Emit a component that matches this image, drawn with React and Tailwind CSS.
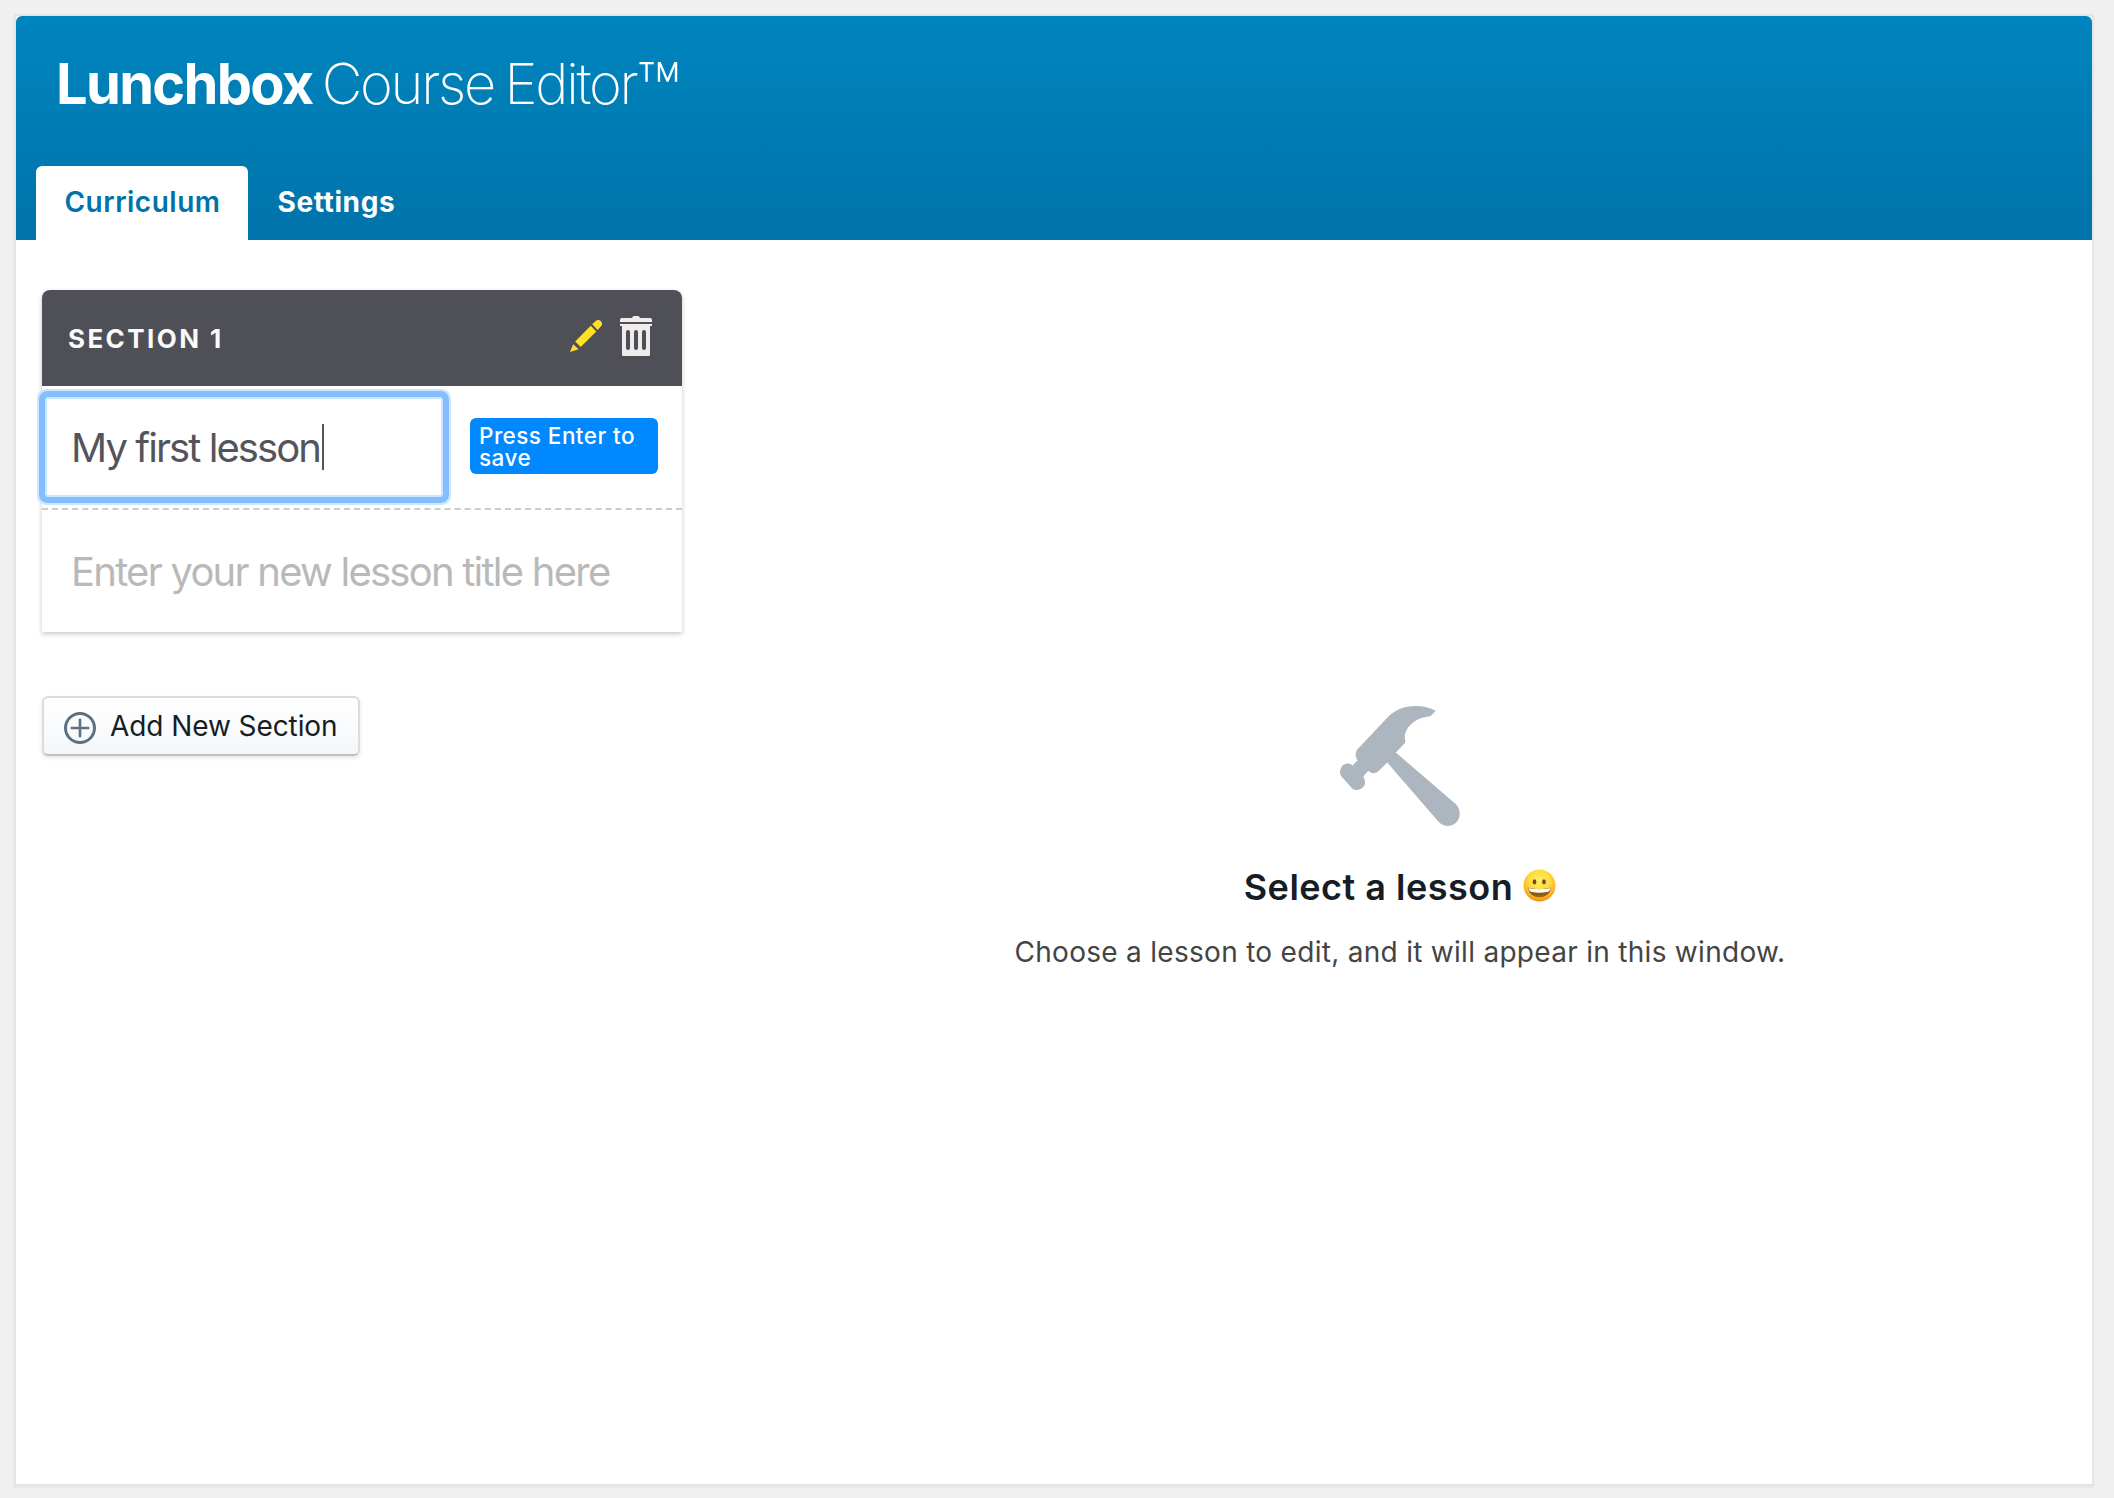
function Pencil() {
  return (
    <svg className="block h-8 w-8" viewBox="0 0 32 32" fill="#ffdf2e" aria-hidden="true">
      <path d="M0 32 3.2 24.2 8.6 29.2z" />
      <path d="M5.2 21.500 20.700 5.700 26.300 11.400 10.700 27.100z" />
      <path d="M22.200 4.300 25.400 1.200C27.100-.4 29.500-.2 31 1.300c1.400 1.500 1.400 3.800-.2 5.300L27.700 9.900z" />
    </svg>
  );
}

function Trash() {
  return (
    <svg className="block h-10 w-8" viewBox="0 0 32 40" aria-hidden="true">
      <path fill="#f0eceb" d="M2 2h10C12.500.6 13.500 0 15 0h2c1.500 0 2.500.6 3 2h10c1.300 0 2 .8 2 2v2H0V4c0-1.200.7-2 2-2z" />
      <path fill="#f0eceb" d="M0 8h32v2h-2v28.500c0 1-.5 1.500-1.500 1.500h-25c-1 0-1.500-.5-1.500-1.500V10H0z" />
      <path stroke="#4f4f57" strokeWidth="4" strokeLinecap="round" d="M8 16v16M16 16v16M24 16v16" />
    </svg>
  );
}

function CirclePlus() {
  return (
    <svg className="block h-8 w-8" viewBox="0 0 32 32" fill="none" stroke="#5d7183" aria-hidden="true">
      <circle cx="16" cy="16" r="14.500" strokeWidth="3" />
      <path d="M16 7.700v16.600M7.700 16h16.600" strokeWidth="2.600" strokeLinecap="round" />
    </svg>
  );
}

function Hammer() {
  return (
    <svg className="block h-[120px] w-[120px]" viewBox="90 77 361 361" fill="#adb6bf" aria-hidden="true">
      <path d="M232 112C256 88 284 77 318 77C340 77 361 83 378 91L362 108C322 110 287 137 285 170C285 176 287 181 287 187L258 217L438 372C446 379 450 390 450 402C450 422 434 438 414 438C403 438 393 433 387 426L232 247L208 271C198 281 183 282 175 272L160 289C168 303 166 314 160 321C152 330 137 333 127 325L97 292C89 284 88 270 94 261C101 250 116 246 128 256L143 240C135 231 136 216 142 208Z" />
    </svg>
  );
}

function Grin() {
  return (
    <svg className="mb-1 block h-[33px] w-[33px]" viewBox="0 0 33 33" role="img" aria-label="😀">
      <defs>
        <radialGradient id="face" cx="0.5" cy="0.34" r="0.66">
          <stop offset="0" stopColor="#fff06a" />
          <stop offset="0.5" stopColor="#ffdb3d" />
          <stop offset="0.8" stopColor="#fcb423" />
          <stop offset="1" stopColor="#ee8c18" />
        </radialGradient>
        <linearGradient id="mouth" x1="0" y1="0" x2="0" y2="1">
          <stop offset="0" stopColor="#6b3c0c" />
          <stop offset="1" stopColor="#a5690f" />
        </linearGradient>
      </defs>
      <circle cx="16.500" cy="16.500" r="16" fill="url(#face)" />
      <ellipse cx="11.500" cy="12.800" rx="1.900" ry="2.600" fill="#7a4a10" />
      <ellipse cx="21" cy="12.800" rx="1.900" ry="2.600" fill="#7a4a10" />
      <path fill="url(#mouth)" d="M5.300 18.700C12 20.400 20.500 20.400 27.700 18.700C27.500 24.500 22.500 28.300 16.500 28.300S5.500 24.500 5.300 18.700z" />
      <path fill="#fff" d="M5.600 19C12 20.600 20.500 20.600 27.400 19C27.200 21.600 26 22.600 24.500 22.900C19 24 14 24 8.500 22.900C6.800 22.600 5.900 21.500 5.600 19z" />
    </svg>
  );
}

function Header() {
  return (
    <header className="flex h-[224px] flex-col justify-between rounded-t-md bg-linear-to-b from-[#0085be] to-[#0073aa] text-white">
      <h1 className="flex pt-[33px] pl-[40px] text-[56px] leading-[70px] whitespace-pre">
        <span className="font-bold tracking-[-1.700px]">Lunchbox</span>
        <span className="ml-[9px] font-extralight tracking-[-2.250px] [word-spacing:-3px]">Course Editor</span>
        <span className="mt-[6px] text-[75px] font-extralight">™</span>
      </h1>
      <nav className="flex pl-5 text-[28px] leading-9">
        <a className="flex h-[74px] w-[212px] justify-center rounded-t-md bg-white pt-[18px] pl-px font-semibold tracking-[0.500px] text-[#0073aa]">Curriculum</a>
        <a className="flex h-[74px] items-start pt-[18px] pl-[29.500px] font-bold tracking-[0.600px]">Settings</a>
      </nav>
    </header>
  );
}

function SectionCard() {
  return (
    <section className="w-[640px] rounded-t-lg bg-white shadow-[0_2px_5px_rgba(0,0,0,0.22)]">
      <div className="flex h-24 items-center rounded-t-lg bg-[#4f4f57] pr-[30px] pl-[26px]">
        <h2 className="flex-1 pt-px text-[26px] leading-8 font-bold tracking-[2.400px] text-[#fafafa]">SECTION 1</h2>
        <div className="mb-1 flex items-center gap-[18px]">
          <Pencil />
          <Trash />
        </div>
      </div>
      <div className="flex h-[124px] border-b-2 border-dashed border-[#cccccc]">
        <div className="mt-[11px] ml-[3px] flex h-[100px] w-[398px] items-center rounded-[3px] border-2 border-[#cce4fc] bg-white pl-[24px] shadow-[0_0_0_6px_#85beff,0_0_0_8px_#cee6ff]">
          <span className="pt-[2px] text-[40px] leading-[48px] tracking-[-1.930px] text-[#54555c]">My first lesson</span>
          <span className="ml-[2px] h-[46px] w-0.5 bg-[#54555c]" />
        </div>
        <div className="mt-8 ml-[27px] h-14 w-[188px] rounded-md bg-[#0088ff] px-[9px] pt-[7px] text-[22.500px] leading-[22px] font-medium tracking-[0.450px] text-white">
          Press Enter to save
        </div>
      </div>
      <div className="flex h-[122px] items-center pt-[2px] pl-[29px]">
        <span className="text-[40px] leading-[48px] tracking-[-1.760px] text-[#b9b9b9]">Enter your new lesson title here</span>
      </div>
    </section>
  );
}

export default function App() {
  return (
    <div className="h-[1498px] w-[2114px] bg-[#f0f0f0] p-3.5 pr-5 font-['Inter','Liberation_Sans',sans-serif]">
      <main className="flex h-[1472px] w-full flex-col border-2 border-[#e5e5e5] bg-white shadow-[0_2px_2px_rgba(0,0,0,0.04)]">
        <Header />
        <div className="flex flex-1">
          <div className="w-[692px] pt-[50px] pl-[26px]">
            <SectionCard />
            <button className="mt-16 flex h-[60px] w-[318px] items-center rounded-md border-2 border-[#dcdcdc] border-b-[#bfc0c1] bg-linear-to-b from-white to-[#f4f7fa] pl-5 shadow-[0_2px_4px_rgba(0,0,0,0.1)]">
              <span className="mt-1"><CirclePlus /></span>
              <span className="ml-[14px] text-[28px] leading-9 tracking-[-0.080px] text-[#161d25]">Add New Section</span>
            </button>
          </div>
          <div className="flex flex-1 flex-col items-center pt-[466px]">
            <Hammer />
            <h3 className="mt-[39px] flex items-center gap-[10px] text-[36px] leading-11 font-semibold tracking-[0.500px] text-[#161d25]">
              Select a lesson
              <Grin />
            </h3>
            <p className="mt-[25px] text-[28px] leading-9 tracking-[0.290px] text-[#444444]">
              Choose a lesson to edit, and it will appear in this window.
            </p>
          </div>
        </div>
      </main>
    </div>
  );
}
